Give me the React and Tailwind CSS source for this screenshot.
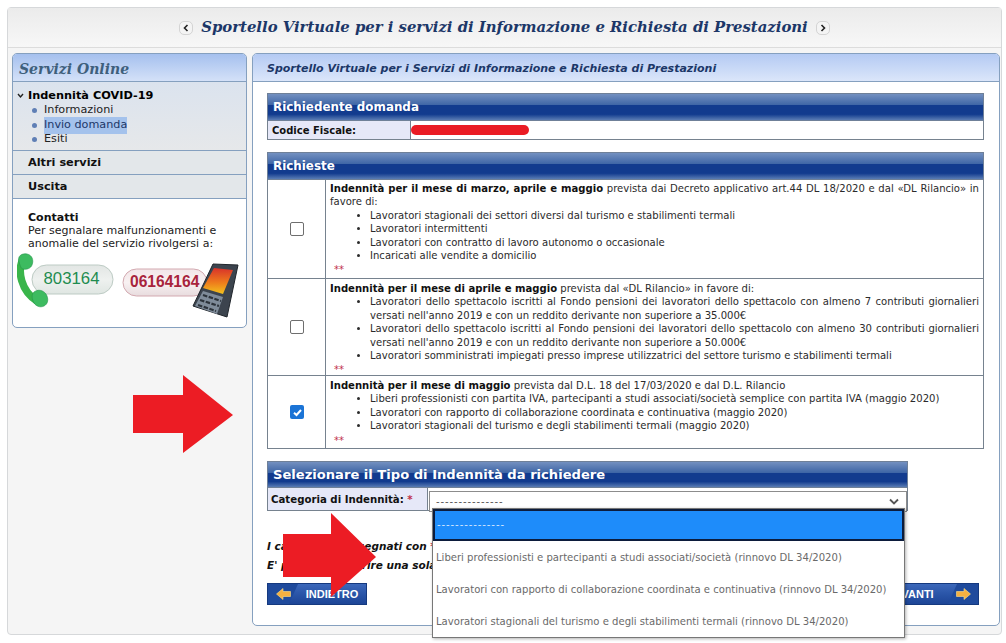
const verdana = "font-['DejaVu_Sans','Liberation_Sans',sans-serif]";

function SectionHead({ children, big }) {
  return (
    <div className={`border border-[#6f8098] bg-[linear-gradient(#7390c0_0%,#3f66a6_42%,#123b8e_43%,#123b8e_78%,#5a7cb4_100%)] pl-[5px] font-bold text-white ${big ? "h-[27px] text-[13.1px] leading-[25px]" : "h-[28px] text-[11.9px] leading-[27px]"}`}>
      {children}
    </div>
  );
}

function Bullets({ items }) {
  return (
    <ul className="pl-[40px] list-disc">
      {items.map((t) => (
        <li key={t} className="text-justify [text-align-last:left]">{t}</li>
      ))}
    </ul>
  );
}

function Box({ checked }) {
  if (checked) {
    return (
      <span className="ml-[1px] flex h-[14px] w-[14px] items-center justify-center rounded-[2px] bg-[#1b74d6]">
        <svg width="11" height="11" viewBox="0 0 11 11"><path d="M2 5.8 4.5 8 9 3" fill="none" stroke="#fff" strokeWidth="2" /></svg>
      </span>
    );
  }
  return <span className="ml-[1px] block h-[14px] w-[14px] rounded-[2px] border border-[#6e6e6e] bg-white" />;
}

function Row({ checked, h, pt, children }) {
  return (
    <div className={`flex border-b border-[#76828f] ${h}`}>
      <div className="flex w-[58px] shrink-0 items-center justify-center border-r border-[#76828f]"><Box checked={checked} /></div>
      <div className={`flex-1 px-[4px] text-[10.07px] leading-[13.4px] text-[#2b2b2b] ${pt}`}>
        {children}
        <div className="pl-[4px] text-[#c0304a] leading-[13px] mt-[1px]">**</div>
      </div>
    </div>
  );
}

function NavButton({ children, dir }) {
  const left = dir === "left";
  return (
    <div className={`flex h-[22px] w-[100px] items-center border border-[#15397f] bg-[linear-gradient(#3c68ba,#2a55a8_50%,#1d4596)] text-[11px] font-bold text-white ${left ? "" : "flex-row-reverse"}`}>
      <span className={`flex h-full w-[30px] items-center justify-center bg-[#1f4a9c] ${left ? "[clip-path:polygon(0_0,100%_0,70%_100%,0_100%)]" : "[clip-path:polygon(30%_0,100%_0,100%_100%,0_100%)]"}`}>
        <svg width="15" height="12" viewBox="0 0 15 12" className={left ? "" : "rotate-180"}>
          <path d="M0.5 6 7 0.5V3.5H14.5V8.5H7V11.5Z" fill="#f5b041" stroke="#ffe08a" strokeWidth="0.6" />
        </svg>
      </span>
      <span className="flex-1 text-center font-['Liberation_Sans',sans-serif]">{children}</span>
    </div>
  );
}

function Phones() {
  return (
    <svg width="226" height="70" viewBox="0 0 226 70" className="block">
      <defs>
        <linearGradient id="scr" x1="0" y1="0" x2="0" y2="1">
          <stop offset="0" stopColor="#d8322a" /><stop offset="0.55" stopColor="#ee7a1c" /><stop offset="1" stopColor="#f2c21e" />
        </linearGradient>
        <linearGradient id="pg" x1="0" y1="0" x2="0" y2="1">
          <stop offset="0" stopColor="#e2e6e4" /><stop offset="0.5" stopColor="#eef1ef" /><stop offset="1" stopColor="#dfe6e2" />
        </linearGradient>
        <linearGradient id="pr" x1="0" y1="0" x2="0" y2="1">
          <stop offset="0" stopColor="#f2e6e8" /><stop offset="0.5" stopColor="#f8f1f2" /><stop offset="1" stopColor="#e8dcde" />
        </linearGradient>
      </defs>
      <rect x="15" y="14" width="81" height="29" rx="14.5" fill="url(#pg)" stroke="#bdcbc4" />
      <text x="26.5" y="33" fontFamily="Liberation Sans, sans-serif" fontSize="16.8" fill="#1f8c50">803164</text>
      <path d="M6 8C0 20 4 40 20 50" fill="none" stroke="#39b54a" strokeWidth="7.5" strokeLinecap="round" />
      <path d="M2 11C0 5 5 2 10 3c5 1 7 6 5 11-1 3-5 5-9 4-2 0-3-4-4-7z" fill="#3dbb60" stroke="#23944a" strokeWidth="0.6" />
      <path d="M17 41c4-3 9-2 12 2 3 5 2 10-2 12-4 2-8 0-10-3-2-4-3-8 0-11z" fill="#3dbb60" stroke="#23944a" strokeWidth="0.6" />
      <rect x="106" y="18" width="84" height="27" rx="13.5" fill="url(#pr)" stroke="#d3a9b0" />
      <text x="113" y="36" fontFamily="Liberation Sans, sans-serif" fontSize="15.6" fontWeight="bold" fill="#a8243c">06164164</text>
      <path d="M196 13 221 14 210 66 176 55Z" fill="#3c444e" stroke="#20252b" strokeWidth="1" strokeLinejoin="round" />
      <path d="M197 17 216 19 206 43 186 37Z" fill="url(#scr)" />
      <path d="M186 40 206 46 200 63 178 55Z" fill="#7f8c9a" />
      <path d="M186 44 204 50M183 49 202 55M181 54 199 60" stroke="#2c333b" strokeWidth="2.2" strokeDasharray="4.5 1.5" />
    </svg>
  );
}

export default function App() {
  return (
    <div className={`relative h-[643px] w-[1006px] overflow-hidden bg-white pl-[7px] pt-[7px] text-[10px] ${verdana}`}>
      <div className="h-[628px] w-[995px] rounded-[4px] border border-[#d6d8da] bg-[#f5f5f5]">
        <header className="flex h-[40px] items-center justify-center gap-[8px] border-b border-[#dcdcdc] bg-[linear-gradient(#ebebeb,#f7f7f7)]">
          <Chevron left />
          <h1 className="font-['DejaVu_Serif',serif] text-[14.85px] font-bold italic text-[#1c3768]">Sportello Virtuale per i servizi di Informazione e Richiesta di Prestazioni</h1>
          <Chevron />
        </header>
        <div className="flex gap-[5px] pl-[4px] pt-[5px]">
          <aside className="h-[275px] w-[235px] rounded-[5px] border border-[#85a0bf] bg-white">
            <div className="flex h-[28px] items-center rounded-t-[4px] border-b border-[#85a0bf] bg-[linear-gradient(#a5c0ee,#d4e1f8)] pl-[6px] pt-[3px] font-['DejaVu_Serif',serif] text-[14px] font-bold italic text-[#3e5f7c]">Servizi Online</div>
            <div className="h-[69px] border-b border-[#85a0bf] bg-[linear-gradient(#dbe3ee,#e6e8ea)] pl-[4px] pt-[6px] text-[#222]">
              <div className="flex items-center text-[11.3px] font-bold leading-[15.5px] text-black">
                <svg width="11" height="8" viewBox="0 0 11 8"><path d="M1 2 3.5 5 6 2" fill="none" stroke="#222" strokeWidth="1.4" /></svg>
                Indennità COVID-19
              </div>
              {["Informazioni", "Invio domanda", "Esiti"].map((t) => (
                <div key={t} className="flex h-[14.5px] items-center pl-[15px] text-[11.2px]">
                  <span className="mr-[7px] h-[5px] w-[5px] rounded-full bg-[#5f7fb5]" />
                  <span className={t === "Invio domanda" ? "bg-[#a4c2ec] text-[#1c3768]" : ""}>{t}</span>
                </div>
              ))}
            </div>
            <div className="flex h-[24px] items-center border-b border-[#85a0bf] bg-[#e3e7ea] pl-[15px] pt-[2px] text-[11.3px] font-bold text-[#111]">Altri servizi</div>
            <div className="flex h-[24px] items-center border-b border-[#85a0bf] bg-[#e3e7ea] pl-[15px] pt-[2px] text-[11.3px] font-bold text-[#111]">Uscita</div>
            <div className="pl-[15px] pt-[12px] text-[11px] leading-[13px] text-[#222]">
              <div className="font-bold text-[#111]">Contatti</div>
              <div>Per segnalare malfunzionamenti e<br />anomalie del servizio rivolgersi a:</div>
            </div>
            <div className="pl-[4px] pt-[1px]"><Phones /></div>
          </aside>
          <main className="h-[573px] w-[748px] rounded-[5px] border border-[#85a0bf] bg-white">
            <div className="flex h-[28px] items-center rounded-t-[4px] border-b border-[#85a0bf] bg-[linear-gradient(#b4caf3,#dbe6fa)] pl-[14px] pt-[4px] text-[11px] font-bold italic text-[#1c3768]">Sportello Virtuale per i Servizi di Informazione e Richiesta di Prestazioni</div>
            <div className="pl-[14px] pt-[11px]">
              <div className="w-[717px]">
                <SectionHead>Richiedente domanda</SectionHead>
                <div className="flex h-[19px] border border-t-0 border-[#76828f]">
                  <div className="flex w-[143px] items-center border-r border-[#76828f] bg-[#e6e8f8] pl-[4px] font-bold text-[#111]">Codice Fiscale:</div>
                  <div className="flex-1 bg-white" />
                </div>
              </div>
              <div className="mt-[12px] w-[717px]">
                <SectionHead>Richieste</SectionHead>
                <div className="border-x border-[#76828f]">
                  <Row h="h-[99px]" pt="pt-[2px]">
                    <p className="text-justify"><b className="text-[#111]">Indennità per il mese di marzo, aprile e maggio</b> prevista dai Decreto applicativo art.44 DL 18/2020 e dal «DL Rilancio» in favore di:</p>
                    <Bullets items={["Lavoratori stagionali dei settori diversi dal turismo e stabilimenti termali", "Lavoratori intermittenti", "Lavoratori con contratto di lavoro autonomo o occasionale", "Incaricati alle vendite a domicilio"]} />
                  </Row>
                  <Row h="h-[97px]" pt="pt-[3px]">
                    <p><b className="text-[#111]">Indennità per il mese di aprile e maggio</b> prevista dal «DL Rilancio» in favore di:</p>
                    <Bullets items={["Lavoratori dello spettacolo iscritti al Fondo pensioni dei lavoratori dello spettacolo con almeno 7 contributi giornalieri versati nell'anno 2019 e con un reddito derivante non superiore a 35.000€", "Lavoratori dello spettacolo iscritti al Fondo pensioni dei lavoratori dello spettacolo con almeno 30 contributi giornalieri versati nell'anno 2019 e con un reddito derivante non superiore a 50.000€", "Lavoratori somministrati impiegati presso imprese utilizzatrici del settore turismo e stabilimenti termali"]} />
                  </Row>
                  <Row h="h-[73px]" pt="pt-[3px]" checked>
                    <p><b className="text-[#111]">Indennità per il mese di maggio</b> prevista dal D.L. 18 del 17/03/2020 e dal D.L. Rilancio</p>
                    <Bullets items={["Liberi professionisti con partita IVA, partecipanti a studi associati/società semplice con partita IVA (maggio 2020)", "Lavoratori con rapporto di collaborazione coordinata e continuativa (maggio 2020)", "Lavoratori stagionali del turismo e degli stabilimenti termali (maggio 2020)"]} />
                  </Row>
                </div>
              </div>
              <div className="mt-[12px] w-[641px]">
                <SectionHead big>Selezionare il Tipo di Indennità da richiedere</SectionHead>
                <div className="flex h-[23px] border-x border-[#76828f] border-b">
                  <div className="flex w-[160px] items-center border-r border-[#76828f] bg-[#e6e8f8] pl-[3px] pt-[2px] text-[10.2px] font-bold text-[#111]">Categoria di Indennità:&nbsp;<span className="text-[#c0304a]">*</span></div>
                  <div className="flex-1 bg-white" />
                </div>
              </div>
              <div className="mt-[26px] text-[10.5px] font-bold italic leading-[19px] text-[#111]">
                <div>I campi contrassegnati con <span className="text-[#c0304a]">*</span> sono obbligatori</div>
                <div>E' possibile inserire una sola domanda</div>
              </div>
              <div className="mt-[8px] flex w-[712px] justify-between">
                <NavButton dir="left">INDIETRO</NavButton>
                <NavButton dir="right">AVANTI</NavButton>
              </div>
            </div>
          </main>
        </div>
      </div>

      {/* redaction stroke */}
      <div className="absolute left-[411px] top-[125px] h-[10px] w-[118px] rounded-full bg-[#ea1c24]" />

      {/* select and its open list */}
      <div className="absolute left-[429px] top-[491px] flex h-[21px] w-[478px] items-center justify-between border border-[#8c8c8c] bg-white pl-[6px] pr-[7px] text-[#555]">
        <span className="tracking-[0.9px]">---------------</span>
        <svg width="10" height="7" viewBox="0 0 10 7"><path d="M1 1.5 5 5.5l4-4" fill="none" stroke="#555" strokeWidth="1.8" /></svg>
      </div>
      <div className="absolute left-[432px] top-[508px] h-[130px] w-[473px] border border-[#777] bg-white text-[10.07px] text-[#6a6a6a] shadow-[1px_1px_3px_rgba(0,0,0,0.3)]">
        <div className="flex h-[32px] items-center border-2 border-[#0c1c3c] bg-[#1e8cfa] pl-[2px] tracking-[0.9px] text-[#d6e8ff]">---------------</div>
        {["Liberi professionisti e partecipanti a studi associati/società (rinnovo DL 34/2020)", "Lavoratori con rapporto di collaborazione coordinata e continuativa (rinnovo DL 34/2020)", "Lavoratori stagionali del turismo e degli stabilimenti termali (rinnovo DL 34/2020)"].map((t) => (
          <div key={t} className="flex h-[32.3px] items-center pl-[3px]">{t}</div>
        ))}
      </div>

      {/* annotation arrows */}
      <svg className="absolute left-[133px] top-[375px]" width="101" height="79" viewBox="0 0 101 79"><path d="M0 20H50V0L100 40 50 78V58H0Z" fill="#ec1c24" /></svg>
      <svg className="absolute left-[283px] top-[513px]" width="94" height="85" viewBox="0 0 94 85"><path d="M0 21H48V0L93 44 48 84V64H0Z" fill="#ec1c24" /></svg>
    </div>
  );
}

function Chevron({ left }) {
  return (
    <span className="flex h-[14px] w-[14px] items-center justify-center rounded-[5px] border border-[#d4d4d4] bg-[#f4f4f4]">
      <svg width="6" height="8" viewBox="0 0 6 8" className={left ? "" : "rotate-180"}><path d="M4.5 1 1.5 4l3 3" fill="none" stroke="#222" strokeWidth="1.6" /></svg>
    </span>
  );
}
